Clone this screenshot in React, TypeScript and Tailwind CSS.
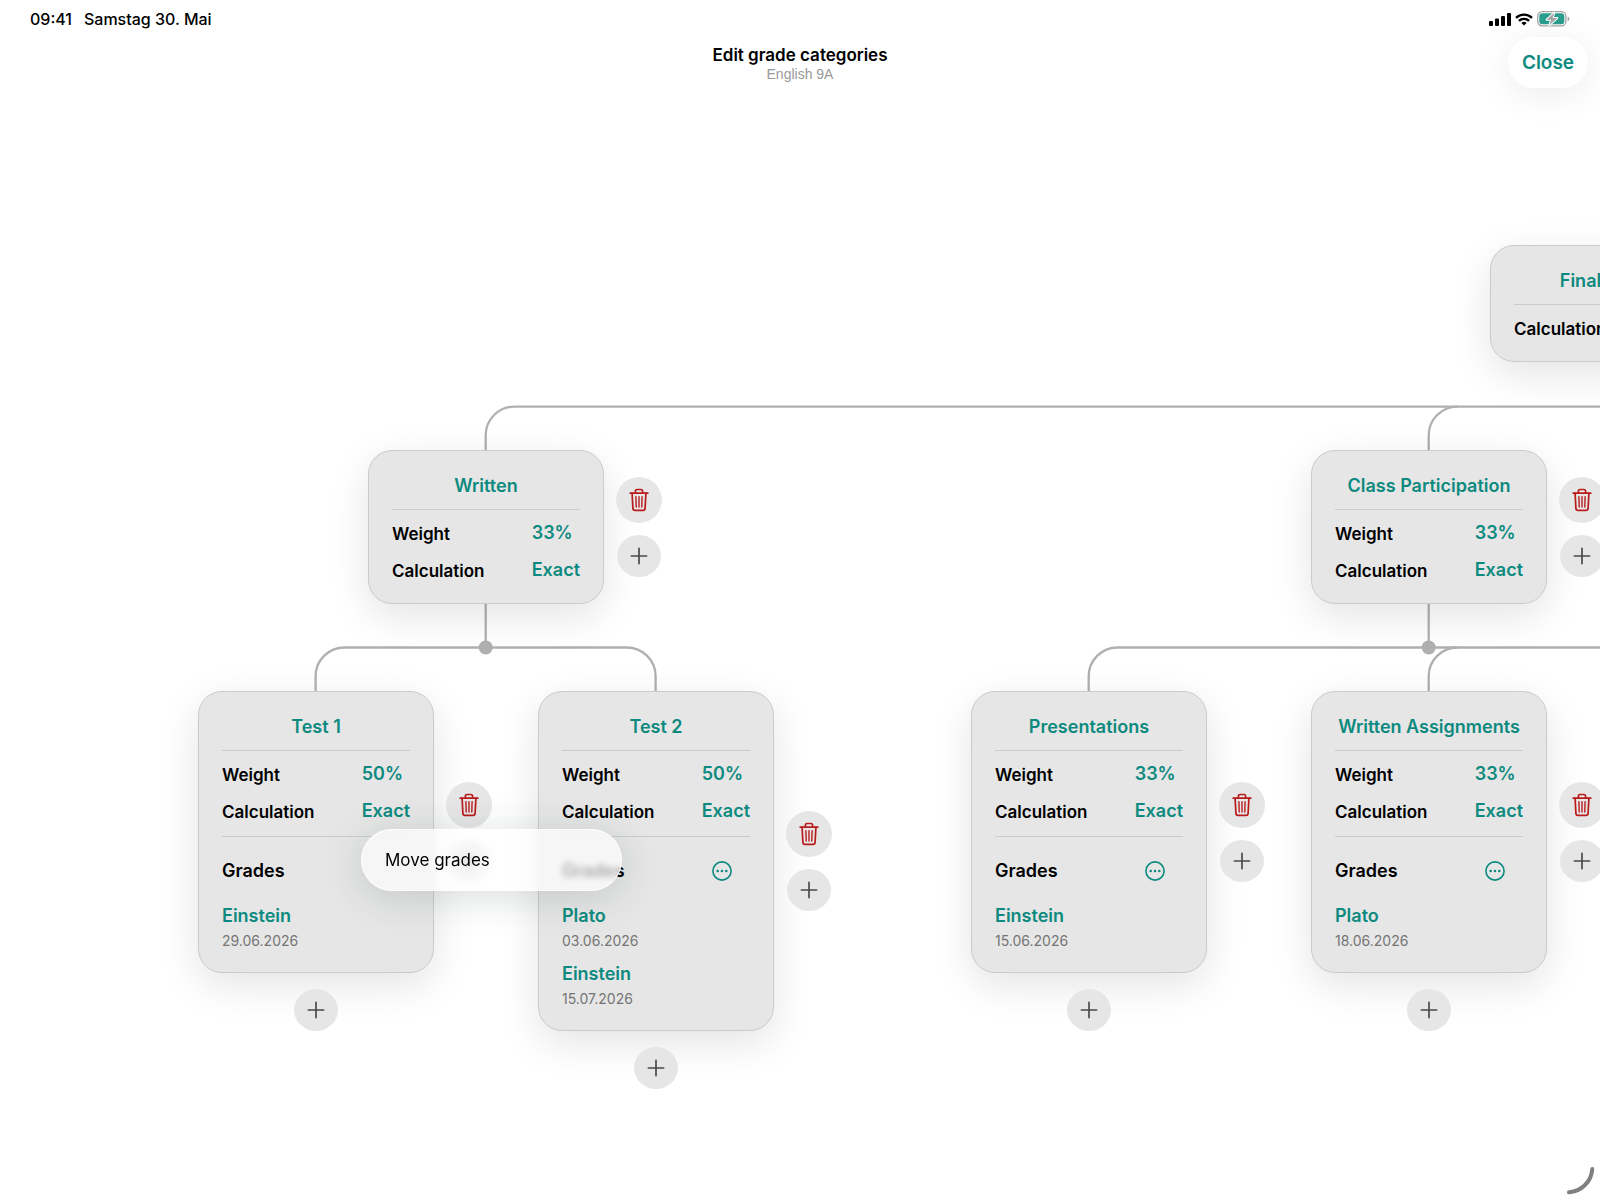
import React from 'react';

interface Grade {
  name: string;
  date: string;
}

interface CategoryNode {
  id: string;
  title: string;
  x: number;
  y: number;
  weight?: string;
  calculation: string;
  grades?: Grade[];
  isRoot?: boolean;
  menuOpen?: boolean;
}

const nodes: CategoryNode[] = [
  { id: 'final', title: 'Final grade', x: 1490, y: 145, calculation: 'Exact', isRoot: true },
  { id: 'written', title: 'Written', x: 368, y: 350, weight: '33%', calculation: 'Exact' },
  { id: 'participation', title: 'Class Participation', x: 1311, y: 350, weight: '33%', calculation: 'Exact' },
  {
    id: 'test-1',
    title: 'Test 1',
    x: 198,
    y: 591,
    weight: '50%',
    calculation: 'Exact',
    grades: [{ name: 'Einstein', date: '29.06.2026' }],
    menuOpen: true,
  },
  {
    id: 'test-2',
    title: 'Test 2',
    x: 538,
    y: 591,
    weight: '50%',
    calculation: 'Exact',
    grades: [
      { name: 'Plato', date: '03.06.2026' },
      { name: 'Einstein', date: '15.07.2026' },
    ],
  },
  {
    id: 'presentations',
    title: 'Presentations',
    x: 971,
    y: 591,
    weight: '33%',
    calculation: 'Exact',
    grades: [{ name: 'Einstein', date: '15.06.2026' }],
  },
  {
    id: 'assignments',
    title: 'Written Assignments',
    x: 1311,
    y: 591,
    weight: '33%',
    calculation: 'Exact',
    grades: [{ name: 'Plato', date: '18.06.2026' }],
  },
];

const TrashIcon = () => (
  <svg width="20" height="24" viewBox="0 0 20 24" fill="none" stroke="#b91c1c" strokeWidth="1.7" strokeLinecap="round" strokeLinejoin="round">
    <path d="M1.2 5.2h17.6" />
    <path d="M6.4 5V3.2c0-1 .7-1.7 1.7-1.7h3.8c1 0 1.7.7 1.7 1.7V5" />
    <path d="M3.1 5.4l.8 15c.1 1.2.9 2 2.1 2h8c1.2 0 2-.8 2.1-2l.8-15" />
    <path d="M6.9 8.6l.3 10.4M10 8.6V19M13.1 8.6L12.8 19" strokeWidth="1.4" />
  </svg>
);

const PlusIcon = () => (
  <svg width="18" height="18" viewBox="0 0 18 18" fill="none" stroke="#4a4a4a" strokeWidth="1.7" strokeLinecap="round">
    <path d="M9 1.4v15.2M1.4 9h15.2" />
  </svg>
);

const MoreIcon = () => (
  <svg width="20" height="20" viewBox="0 0 20 20" fill="none">
    <circle cx="10" cy="10" r="9.1" stroke="#0d8a7f" strokeWidth="1.6" />
    <circle cx="5.7" cy="10" r="1.3" fill="#0d8a7f" />
    <circle cx="10" cy="10" r="1.3" fill="#0d8a7f" />
    <circle cx="14.3" cy="10" r="1.3" fill="#0d8a7f" />
  </svg>
);

const SignalIcon = () => (
  <svg width="22" height="13" viewBox="0 0 22 13" fill="black">
    <rect x="0" y="8" width="4" height="5" rx="1" />
    <rect x="6" y="5.6" width="4" height="7.4" rx="1" />
    <rect x="12" y="3" width="4" height="10" rx="1" />
    <rect x="18" y="0" width="4" height="13" rx="1" />
  </svg>
);

const WifiIcon = () => (
  <svg width="18" height="13" viewBox="0 0 18 13" fill="none" stroke="black" strokeWidth="2.3">
    <path d="M1 4.9a11.4 11.4 0 0 1 16 0" />
    <path d="M3.9 7.9a7.3 7.3 0 0 1 10.2 0" />
    <path d="M9 12.6l-2.6-2.7a3.8 3.8 0 0 1 5.2 0z" fill="black" stroke="none" />
  </svg>
);

const BatteryIcon = () => (
  <svg width="33" height="16" viewBox="0 0 33 16" fill="none">
    <rect x="0.7" y="0.7" width="28.2" height="14.2" rx="4.6" stroke="#a3a3a3" strokeWidth="1.3" />
    <path d="M30.6 5.4c1.1.4 1.7 1.3 1.7 2.4s-.6 2-1.7 2.4z" fill="#a3a3a3" />
    <rect x="2.3" y="2.3" width="25" height="11" rx="3" fill="#2a9d8f" />
    <path d="M17.4 1.4L9.6 8.7h4.6l-1.9 5.6 8-7.3h-4.7z" fill="#a3a3a3" stroke="white" strokeWidth="2" strokeLinejoin="round" paintOrder="stroke" />
  </svg>
);

const Connectors = () => (
  <svg className="absolute inset-0 h-full w-full" fill="none" stroke="#b0b0b0" strokeWidth="2.3">
    {/* Final grade -> Written, Class Participation */}
    <path d="M1608 262V306" />
    <path d="M485.7 350V335.4a28.8 28.8 0 0 1 28.8-28.8H2900" />
    <path d="M1428.7 350V335.4a28.8 28.8 0 0 1 28.8-28.8" />
    {/* Written -> Test 1, Test 2 */}
    <path d="M485.7 503V547" />
    <path d="M315.6 591V576.3a28.8 28.8 0 0 1 28.8-28.8H626.8a28.8 28.8 0 0 1 28.8 28.8V591" />
    {/* Class Participation -> Presentations, Written Assignments */}
    <path d="M1428.7 503V547" />
    <path d="M1088.7 591V576.3a28.8 28.8 0 0 1 28.8-28.8H2300" />
    <path d="M1428.7 591V576.3a28.8 28.8 0 0 1 28.8-28.8" />
    <g fill="#b0b0b0" stroke="none">
      <circle cx="1608.5" cy="306.6" r="7" />
      <circle cx="485.7" cy="547.5" r="7" />
      <circle cx="1428.7" cy="547.5" r="7" />
    </g>
  </svg>
);

const AddButton = ({ label }: { label: string }) => (
  <button aria-label={label} className="flex h-[42px] w-11 items-center justify-center justify-self-center rounded-[50%] bg-[#e6e6e6]">
    <PlusIcon />
  </button>
);

const CategoryCard = ({ node }: { node: CategoryNode }) => (
  <section className="rounded-3xl border border-[#cbcbcb] bg-[#e6e6e6] px-[23px] pt-[19px] pb-[13px] shadow-[0_12px_40px_rgba(0,0,0,0.11)]">
    <button className="block w-full text-center text-lg leading-8 font-semibold whitespace-nowrap text-[#0d8a7f]">
      {node.title}
    </button>
    <div className="mt-[7px] flex justify-between border-t border-[#cbcbcb] pt-1 font-semibold">
      <div className="pt-0.5 text-[17px] leading-[37px] text-black">
        {node.weight && <div>Weight</div>}
        <div>Calculation</div>
      </div>
      <div className="flex flex-col items-start text-lg leading-[37px] text-[#0d8a7f]">
        {node.weight && <button>{node.weight}</button>}
        <button>{node.calculation}</button>
      </div>
    </div>
    {node.grades && (
      <div className="mt-[5px] border-t border-[#cbcbcb] pt-4 pb-[7px]">
        <div className="flex h-9 items-center justify-between pr-[18px]">
          <h3 className="text-lg font-semibold text-black">Grades</h3>
          {!node.menuOpen && (
            <button aria-label={`${node.title} grades menu`}>
              <MoreIcon />
            </button>
          )}
        </div>
        <ul className="mt-3">
          {node.grades.map((grade) => (
            <li key={grade.date} className="mb-2 last:mb-px">
              <button className="block text-lg leading-[30px] font-semibold text-[#0d8a7f]">{grade.name}</button>
              <div className="text-sm leading-5 text-[#757575]">{grade.date}</div>
            </li>
          ))}
        </ul>
      </div>
    )}
  </section>
);

const TreeNode = ({ node }: { node: CategoryNode }) => (
  <div
    className="absolute grid grid-cols-[236px_46px] items-center gap-x-3 gap-y-4"
    style={{ left: node.x, top: node.y }}
  >
    <CategoryCard node={node} />
    {!node.isRoot && (
      <div className="flex flex-col items-center gap-3">
        <button aria-label={`Delete ${node.title}`} className="flex size-[46px] items-center justify-center rounded-full bg-[#e6e6e6]">
          <TrashIcon />
        </button>
        <AddButton label={`Add category next to ${node.title}`} />
      </div>
    )}
    {node.grades && <AddButton label={`Add category below ${node.title}`} />}
  </div>
);

export default function App() {
  return (
    <div className="relative flex min-h-screen flex-col overflow-hidden bg-white font-['Inter','Liberation_Sans',sans-serif]">
      <div className="flex h-[37px] items-center justify-between px-[30px] pt-px text-base font-medium text-black">
        <div className="flex gap-3">
          <span>09:41</span>
          <span>Samstag 30. Mai</span>
        </div>
        <div className="flex items-center gap-1">
          <SignalIcon />
          <WifiIcon />
          <BatteryIcon />
        </div>
      </div>

      <header className="grid h-[63px] grid-cols-[1fr_auto_1fr] items-start">
        <div className="col-start-2 pt-2 text-center">
          <h1 className="text-[17px] leading-[21px] font-semibold text-black">Edit grade categories</h1>
          <p className="font-['Liberation_Sans',sans-serif] text-sm leading-4 text-[#999999]">English 9A</p>
        </div>
        <button className="mr-3 h-[51px] w-20 justify-self-end rounded-full bg-white pt-0.5 text-[19px] font-semibold text-[#0d8a7f] shadow-[0_6px_36px_rgba(0,0,0,0.08)]">
          Close
        </button>
      </header>

      <main className="relative min-h-[1100px] flex-1">
        <Connectors />
        {nodes.map((node) => (
          <TreeNode key={node.id} node={node} />
        ))}

        {/* Context menu of the Test 1 grades */}
        <div
          role="menu"
          className="absolute top-[729px] left-[361px] w-[261px] rounded-full border border-white/80 bg-white/65 shadow-[0_6px_40px_rgba(20,50,40,0.16)] backdrop-blur-[3px]"
        >
          <button role="menuitem" className="block w-full px-[23px] py-4 text-left text-[17px] leading-7 text-black">
            Move grades
          </button>
        </div>
      </main>

      <svg className="absolute right-0 bottom-0 size-[60px]" viewBox="0 0 60 60" fill="none" stroke="#808080" strokeWidth="4" strokeLinecap="round">
        <path d="M29 52.3A25 25 0 0 0 52.3 29" />
      </svg>
    </div>
  );
}
